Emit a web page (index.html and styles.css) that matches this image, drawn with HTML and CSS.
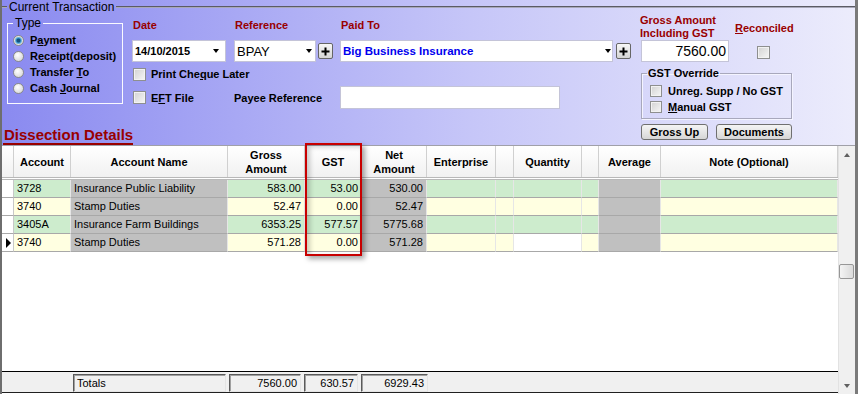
FILE: index.html
```html
<!DOCTYPE html>
<html lang="en">
<head>
    <meta charset="UTF-8">
    <title>Current Transaction</title>
    <link rel="stylesheet" href="styles.css">
</head>
<body>
    <div class="window">
        <div class="panel">
            <fieldset class="current">
                <legend>Current Transaction</legend>
                <div class="current-body">
                    <div class="left-col">
                        <fieldset class="type-box">
                            <legend>Type</legend>
                            <div class="radio-row"><span class="radio checked"></span><span>P<u>a</u>yment</span></div>
                            <div class="radio-row"><span class="radio"></span><span>R<u>e</u>ceipt(deposit)</span></div>
                            <div class="radio-row"><span class="radio"></span><span>Transfer <u>T</u>o</span></div>
                            <div class="radio-row"><span class="radio"></span><span>Cash <u>J</u>ournal</span></div>
                        </fieldset>
                        <div class="section-title">Dissection Details</div>
                    </div>

                    <div class="mid">
                        <div class="lbl red">Date</div>
                        <div class="lbl red">Reference</div>
                        <div class="lbl red">Paid To</div>

                        <div class="combo date-box"><span class="bold">14/10/2015</span><span class="arrow"></span></div>
                        <div class="combo-wrap">
                            <div class="combo ref-box"><span class="big">BPAY</span><span class="arrow"></span></div>
                            <span class="plus"><svg width="9" height="9" viewBox="0 0 9 9"><path d="M4.5 0.5v8M0.5 4.5h8" stroke="#000" stroke-width="2"/></svg></span>
                        </div>
                        <div class="combo-wrap">
                            <div class="combo paid-box"><span class="payee">Big Business Insurance</span><span class="arrow"></span></div>
                            <span class="plus"><svg width="9" height="9" viewBox="0 0 9 9"><path d="M4.5 0.5v8M0.5 4.5h8" stroke="#000" stroke-width="2"/></svg></span>
                        </div>

                        <div class="check-row span-all"><span class="check"></span><span>Print Che<u>q</u>ue Later</span></div>

                        <div class="check-row"><span class="check"></span><span>E<u>F</u>T File</span></div>
                        <div class="lbl payee-lbl">Payee Reference</div>
                        <div class="textbox payee-box"></div>
                    </div>

                    <div class="right">
                        <div class="right-top">
                            <div class="lbl red gross-lbl">Gross Amount<br>Including GST</div>
                            <div class="lbl red recon-lbl"><u>R</u>econciled</div>
                            <div class="textbox amount-box">7560.00</div>
                            <span class="check recon-check"></span>
                        </div>
                        <fieldset class="gst-box">
                            <legend>GST Override</legend>
                            <div class="check-row"><span class="check"></span><span>Unre<u>g</u>. Supp / No GST</span></div>
                            <div class="check-row"><span class="check"></span><span><u>M</u>anual GST</span></div>
                        </fieldset>
                        <div class="buttons">
                            <span class="btn gross-btn">Gross Up</span>
                            <span class="btn docs-btn">Documents</span>
                        </div>
                    </div>
                </div>
            </fieldset>
        </div>

        <div class="grid-area">
            <div class="grid">
                <div class="cols head">
                    <div class="hc"></div>
                    <div class="hc">Account</div>
                    <div class="hc">Account Name</div>
                    <div class="hc">Gross<br>Amount</div>
                    <div class="hc">GST</div>
                    <div class="hc">Net<br>Amount</div>
                    <div class="hc">Enterprise</div>
                    <div class="hc"></div>
                    <div class="hc">Quantity</div>
                    <div class="hc"></div>
                    <div class="hc">Average</div>
                    <div class="hc">Note (Optional)</div>
                </div>

                <div class="cols row green">
                    <div class="ind"></div>
                    <div class="cell">3728</div>
                    <div class="cell grey">Insurance Public Liability</div>
                    <div class="cell num">583.00</div>
                    <div class="cell num">53.00</div>
                    <div class="cell num grey">530.00</div>
                    <div class="cell"></div>
                    <div class="cell"></div>
                    <div class="cell"></div>
                    <div class="cell"></div>
                    <div class="cell grey"></div>
                    <div class="cell"></div>
                </div>
                <div class="cols row yellow">
                    <div class="ind"></div>
                    <div class="cell">3740</div>
                    <div class="cell grey">Stamp Duties</div>
                    <div class="cell num">52.47</div>
                    <div class="cell num">0.00</div>
                    <div class="cell num grey">52.47</div>
                    <div class="cell"></div>
                    <div class="cell"></div>
                    <div class="cell"></div>
                    <div class="cell"></div>
                    <div class="cell grey"></div>
                    <div class="cell"></div>
                </div>
                <div class="cols row green">
                    <div class="ind"></div>
                    <div class="cell">3405A</div>
                    <div class="cell grey">Insurance Farm Buildings</div>
                    <div class="cell num">6353.25</div>
                    <div class="cell num">577.57</div>
                    <div class="cell num grey">5775.68</div>
                    <div class="cell"></div>
                    <div class="cell"></div>
                    <div class="cell"></div>
                    <div class="cell"></div>
                    <div class="cell grey"></div>
                    <div class="cell"></div>
                </div>
                <div class="cols row yellow">
                    <div class="ind"><span class="pointer"></span></div>
                    <div class="cell">3740</div>
                    <div class="cell grey">Stamp Duties</div>
                    <div class="cell num">571.28</div>
                    <div class="cell num">0.00</div>
                    <div class="cell num grey">571.28</div>
                    <div class="cell"></div>
                    <div class="cell"></div>
                    <div class="cell white"></div>
                    <div class="cell"></div>
                    <div class="cell grey"></div>
                    <div class="cell"></div>
                </div>

                <div class="grid-space"></div>

                <div class="totals">
                    <span class="tbox tlabel">Totals</span>
                    <span class="tbox tgross">7560.00</span>
                    <span class="tbox tgst">630.57</span>
                    <span class="tbox tnet">6929.43</span>
                </div>
            </div>

            <div class="scrollbar">
                <div class="sb-btn"><span class="up"></span></div>
                <div class="thumb"></div>
                <div class="sb-btn sb-down"><span class="down"></span></div>
            </div>
        </div>

        <!-- highlight round the GST column -->
        <div class="highlight"></div>
    </div>
</body>
</html>
```

FILE: styles.css
```css
body {
    margin: 0;
    background: #fff;
    font-family: "Liberation Sans", Arial, sans-serif;
    font-size: 11px;
    color: #000;
}
.window {
    position: relative;
    width: 858px;
    height: 394px;
    box-sizing: border-box;
    border-left: 2px solid #6e6e6e;
    border-right: 3px solid #7a7a7a;
    overflow: hidden;
}
u {
    text-decoration: underline;
    text-underline-offset: 1px;
}

/* top panel */
.panel {
    height: 145px;
    border-bottom: 1px solid #a0a0a8;
    background: linear-gradient(to right, #8a8af0, #c6c6f8 55%, #ececfc);
}
.current {
    margin: 0;
    padding: 2px 0 0 5px;
    height: 145px;
    box-sizing: border-box;
    border: none;
    border-top: 2px groove #a8a8b8;
    min-width: 0;
}
.current > legend {
    padding: 0 2px;
    font-size: 12px;
    line-height: 14px;
}
.current-body {
    display: flex;
}
.left-col {
    width: 116px;
    flex: 0 0 116px;
}
.type-box {
    margin: 0;
    padding: 2px 0 7px 5px;
    border: 1px solid #fafaff;
    width: 116px;
    box-sizing: border-box;
    min-width: 0;
}
.type-box > legend {
    padding: 0 2px;
    margin-left: 0;
    font-size: 12px;
    line-height: 14px;
}
.radio-row {
    display: flex;
    align-items: center;
    height: 16px;
    font-weight: bold;
    white-space: nowrap;
}
.radio {
    width: 11px;
    height: 11px;
    box-sizing: border-box;
    border-radius: 50%;
    border: 1px solid #8a8a8a;
    background: radial-gradient(circle at 40% 35%, #ffffff, #cfcfcf);
    margin-right: 6px;
    flex: 0 0 11px;
}
.radio.checked {
    background: radial-gradient(circle, #17507e 0 1.5px, #3aa0d8 2.5px, #9cc6dc 3.5px, #e4e4e4 4px, #c8c8c8);
}
.section-title {
    display: inline-block;
    margin: 22px 0 0 -4px;
    padding: 0 0 0 1px;
    font-size: 15px;
    line-height: 17px;
    font-weight: bold;
    color: #990000;
    white-space: nowrap;
    border-bottom: 2px solid #990000;
}

.mid {
    margin-left: 9px;
    display: grid;
    grid-template-columns: 102px 106px 292px;
    grid-template-rows: 24px 22px 24px 23px;
    width: 500px;
}
.lbl {
    font-weight: bold;
    line-height: 13px;
    padding-left: 1px;
    white-space: nowrap;
}
.mid > .lbl.red {
    padding-top: 3px;
}
.red {
    color: #990000;
}
.combo, .textbox {
    background: #fff;
    border: 1px solid #c4c4d8;
    box-sizing: border-box;
    height: 22px;
}
.combo {
    display: flex;
    align-items: center;
    justify-content: space-between;
    padding: 0 3px 0 2px;
}
.date-box {
    width: 94px;
    padding-right: 6px;
}
.combo-wrap {
    display: flex;
    align-items: flex-start;
}
.ref-box {
    width: 82px;
}
.paid-box {
    width: 273px;
    padding-right: 1px;
}
.bold {
    font-weight: bold;
}
.big {
    font-size: 13px;
}
.payee {
    color: #0000ee;
    font-weight: bold;
    font-size: 11.5px;
}
.arrow {
    width: 0;
    height: 0;
    border-left: 3.5px solid transparent;
    border-right: 3.5px solid transparent;
    border-top: 4px solid #000;
}
.plus {
    margin: 3px 0 0 2px;
    width: 15px;
    height: 16px;
    box-sizing: border-box;
    border: 1px solid #666;
    border-radius: 2px;
    background: linear-gradient(#f8f8f8, #d4d4d4);
    display: flex;
    align-items: center;
    justify-content: center;
}
.paid-box + .plus {
    margin-left: 3px;
}
.check-row {
    display: flex;
    align-items: center;
    font-weight: bold;
    white-space: nowrap;
    padding-left: 1px;
}
.span-all {
    grid-column: 1 / 4;
}
.check {
    display: inline-block;
    width: 13px;
    height: 13px;
    box-sizing: border-box;
    border: 1px solid #8e8f8f;
    background: linear-gradient(135deg, #d2d2d2, #f6f6f6);
    box-shadow: inset 0 0 0 1px #f2f2f2;
    margin-right: 5px;
    flex: 0 0 13px;
}
.payee-lbl {
    align-self: center;
    padding-left: 0;
    margin-top: 2px;
}
.payee-box {
    width: 220px;
    height: 23px;
}

.right {
    margin-left: 8px;
    width: 155px;
}
.right-top {
    display: grid;
    grid-template-columns: 95px 60px;
    grid-template-rows: 24px 22px;
}
.gross-lbl {
    margin-top: -2px;
    padding-left: 0;
}
.recon-lbl {
    margin-top: 6px;
    padding-left: 0;
}
.amount-box {
    width: 88px;
    margin-left: 1px;
    text-align: right;
    font-size: 14px;
    line-height: 20px;
    padding-right: 2px;
}
.recon-check {
    margin: 6px 0 0 22px;
}
.gst-box {
    margin: 5px 0 0 1px;
    padding: 3px 0 3px 5px;
    width: 151px;
    box-sizing: border-box;
    border: 1px solid #a8a8bc;
    box-shadow: inset 1px 1px 0 #f4f4ff, 1px 1px 0 #f4f4ff;
    min-width: 0;
}
.gst-box > legend {
    padding: 0 1px;
    font-weight: bold;
    line-height: 13px;
}
.gst-box .check-row {
    height: 16px;
    padding-left: 3px;
}
.gst-box .check {
    width: 12px;
    height: 12px;
    flex-basis: 12px;
    margin-right: 6px;
}
.buttons {
    display: flex;
    gap: 8px;
    margin: 5px 0 0 1px;
}
.btn {
    height: 16px;
    box-sizing: border-box;
    border: 1px solid #707070;
    border-radius: 3px;
    background: linear-gradient(#f4f4f4, #e6e6e6 50%, #d6d6d6);
    font-weight: bold;
    line-height: 14px;
    text-align: center;
}
.gross-btn {
    width: 67px;
}
.docs-btn {
    width: 76px;
}

/* dissection grid */
.grid-area {
    display: flex;
    height: 248px;
}
.grid {
    flex: 0 0 836px;
    display: flex;
    flex-direction: column;
}
.cols {
    display: grid;
    grid-template-columns: 12px 57px 157px 77px 57px 65px 69px 18px 68px 17px 62px 177px;
}
.head {
    height: 34px;
    box-sizing: border-box;
    border-bottom: 3px double #b8b8b8;
}
.hc {
    background: linear-gradient(#ffffff, #f1f1f1);
    border-right: 1px solid #d0d0d0;
    display: flex;
    align-items: center;
    justify-content: center;
    text-align: center;
    font-weight: bold;
    line-height: 14px;
    white-space: nowrap;
}
.row > div {
    height: 18px;
    box-sizing: border-box;
    border-bottom: 1px solid #a8a8a8;
    border-right: 1px solid #e6e6e6;
    line-height: 17px;
    white-space: nowrap;
    overflow: hidden;
}
.cell {
    padding: 0 3px;
}
.green .cell {
    background: #cdeccd;
}
.yellow .cell {
    background: #ffffe1;
}
.row .cell.grey {
    background: #c0c0c0;
}
.row .cell.white {
    background: #fff;
}
.num {
    text-align: right;
}
.ind {
    background: #fff;
    border-right-color: #c8c8c8 !important;
    display: flex;
    align-items: center;
    justify-content: center;
}
.pointer {
    width: 0;
    height: 0;
    border-top: 5.5px solid transparent;
    border-bottom: 5.5px solid transparent;
    border-left: 5px solid #000;
    margin-left: 1px;
}
.grid-space {
    flex: 1;
}
.totals {
    height: 20px;
    border-top: 1px solid #000;
    border-bottom: 1px solid #202020;
    margin-bottom: 1px;
    background: #f0f0f0;
    display: flex;
    align-items: flex-end;
    gap: 3px;
    padding-left: 71px;
}
.tbox {
    height: 18px;
    box-sizing: border-box;
    border: 1px solid;
    border-color: #5a5a5a #e4e4e4 #e4e4e4 #5a5a5a;
    box-shadow: inset 1px 1px 0 #a0a0a0;
    line-height: 16px;
    padding: 0 3px;
    text-align: right;
}
.tlabel {
    width: 153px;
    text-align: left;
}
.tgross {
    width: 72px;
}
.tgst {
    width: 54px;
}
.tnet {
    width: 67px;
}

.scrollbar {
    width: 17px;
    box-sizing: border-box;
    background: #f0f0f0;
    border-left: 1px solid #e2e2e2;
    display: flex;
    flex-direction: column;
}
.sb-btn {
    height: 17px;
    display: flex;
    align-items: center;
    justify-content: center;
}
.sb-down {
    margin-top: auto;
}
.up, .down {
    width: 0;
    height: 0;
    border-left: 3px solid transparent;
    border-right: 3px solid transparent;
}
.up {
    border-bottom: 4px solid #606060;
}
.down {
    border-top: 4px solid #606060;
}
.thumb {
    margin: 101px 0 0 0;
    width: 15px;
    height: 15px;
    box-sizing: border-box;
    border: 1px solid #979797;
    border-radius: 2px;
    background: linear-gradient(90deg, #f4f4f4, #dadada);
}

.highlight {
    position: absolute;
    left: 303px;
    top: 143px;
    width: 57px;
    height: 113px;
    box-sizing: border-box;
    border: 2px solid #c80000;
    box-shadow: 3px 3px 5px rgba(0, 0, 0, 0.35), inset 3px 2px 5px rgba(0, 0, 0, 0.2);
}
```
